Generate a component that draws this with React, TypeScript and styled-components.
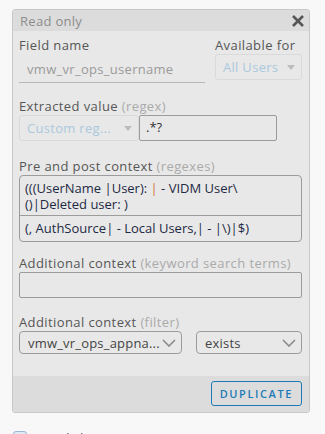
import React from 'react';
import styled, { createGlobalStyle } from 'styled-components';

const GlobalStyle = createGlobalStyle`
  html, body {
    margin: 0;
    padding: 0;
    background: #f8f8f8;
    font-family: 'Open Sans', 'Liberation Sans', sans-serif;
  }
  * { box-sizing: border-box; }
`;

const Caret = () => (
  <svg width="8" height="5" viewBox="0 0 8 5">
    <path d="M0 0 L8 0 L4 5 Z" fill="currentColor" />
  </svg>
);

const Chevron = () => (
  <svg width="14" height="8" viewBox="0 0 14 8">
    <path d="M1 1 L7 7 L13 1" fill="none" stroke="#8a8a8a" strokeWidth="1.6" />
  </svg>
);

const App = () => (
  <>
    <GlobalStyle />
    <Page>
      <Panel>
        <Header>
          <HeaderTitle>Read only</HeaderTitle>
          <Close>
            <svg width="14" height="14" viewBox="0 0 14 14">
              <path d="M2 2 L12 12 M12 2 L2 12" stroke="#565656" strokeWidth="2.6" />
            </svg>
          </Close>
        </Header>
        <Body>
          <FieldRow>
            <Column $grow>
              <Label>Field name</Label>
              <UnderlineInput>vmw_vr_ops_username</UnderlineInput>
            </Column>
            <Column>
              <Label>Available for</Label>
              <DisabledSelect $width={87}>
                All Users
                <Caret />
              </DisabledSelect>
            </Column>
          </FieldRow>

          <Section $gap={15}>
            <Label>
              Extracted value <Hint>(regex)</Hint>
            </Label>
            <InlineRow>
              <DisabledSelect $width={120}>
                Custom reg...
                <Caret />
              </DisabledSelect>
              <TextBox $width={138}>.*?</TextBox>
            </InlineRow>
          </Section>

          <Section $gap={17}>
            <Label>
              Pre and post context <Hint>(regexes)</Hint>
            </Label>
            <ContextBox>
              <ContextPart>
                <ContextLine>
                  (((UserName |User): <Pipe>|</Pipe> - VIDM User\
                </ContextLine>
                <ContextLine>()|Deleted user: )</ContextLine>
              </ContextPart>
              <ContextPart $last>
                <ContextLine>(, AuthSource| - Local Users,| - |\)|$)</ContextLine>
              </ContextPart>
            </ContextBox>
          </Section>

          <Section $gap={13}>
            <Label>
              Additional context <Hint>(keyword search terms)</Hint>
            </Label>
            <TextBox />
          </Section>

          <Section $gap={16}>
            <Label>
              Additional context <Hint>(filter)</Hint>
            </Label>
            <FilterRow>
              <Dropdown $width={163}>
                <span>vmw_vr_ops_appna...</span>
                <Chevron />
              </Dropdown>
              <Dropdown $width={106}>
                <span>exists</span>
                <Chevron />
              </Dropdown>
            </FilterRow>
          </Section>
        </Body>
        <Footer>
          <Button>Duplicate</Button>
        </Footer>
      </Panel>
      <Below>
        <Checkbox />
        <BelowText>Send alert</BelowText>
      </Below>
    </Page>
  </>
);

const Page = styled.div`
  padding: 9px 15px 0 12px;
`;

const Panel = styled.div`
  border: 1px solid #c8c8c8;
  border-radius: 3px;
  background: #e8e8e8;
  overflow: hidden;
`;

const Header = styled.div`
  display: flex;
  align-items: center;
  justify-content: space-between;
  height: 21px;
  padding: 0 4px 0 7px;
  background: #dcdcdc;
`;

const HeaderTitle = styled.span`
  font-size: 13px;
  letter-spacing: 0.3px;
  color: #8c8c8c;
`;

const Close = styled.span`
  display: flex;
  align-items: center;
`;

const Body = styled.div`
  padding: 6px 7px 22px 6px;
`;

const FieldRow = styled.div`
  display: flex;
  gap: 10px;
`;

const Column = styled.div<{ $grow?: boolean }>`
  display: flex;
  flex-direction: column;
  flex: ${p => (p.$grow ? 1 : '0 0 auto')};
`;

const Label = styled.div`
  font-size: 13px;
  line-height: 16px;
  letter-spacing: 0.4px;
  color: #565656;
  margin-bottom: 1px;
  white-space: nowrap;
`;

const Hint = styled.span`
  color: #aaaaaa;
`;

const UnderlineInput = styled.div`
  margin-top: 5px;
  height: 24px;
  padding: 0 0 0 8px;
  font-size: 13px;
  line-height: 20px;
  letter-spacing: 0.3px;
  color: #9a9a9a;
  border-bottom: 1px solid #b8b8b8;
`;

const DisabledSelect = styled.div<{ $width: number }>`
  display: flex;
  align-items: center;
  justify-content: space-between;
  width: ${p => p.$width}px;
  height: 26px;
  padding: 0 6px 0 7px;
  border: 1px solid #dadada;
  border-radius: 3px;
  font-size: 13px;
  letter-spacing: 0.3px;
  color: #aac8de;
  white-space: nowrap;
  svg { color: #bcbcbc; }
`;

const Section = styled.div<{ $gap: number }>`
  margin-top: ${p => p.$gap}px;
`;

const InlineRow = styled.div`
  display: flex;
`;

const TextBox = styled.div<{ $width?: number }>`
  width: ${p => (p.$width ? `${p.$width}px` : '100%')};
  height: 26px;
  padding: 0 6px;
  border: 1px solid #9c9c9c;
  border-radius: 2px;
  font-size: 13px;
  line-height: 22px;
  color: #333;
`;

const ContextBox = styled.div`
  border: 1px solid #9c9c9c;
  border-radius: 4px;
  overflow: hidden;
`;

const ContextPart = styled.div<{ $last?: boolean }>`
  padding: 4px 5px ${p => (p.$last ? '5px' : '3px')};
  border-bottom: ${p => (p.$last ? 'none' : '1px solid #9c9c9c')};
`;

const ContextLine = styled.div`
  font-size: 13px;
  line-height: 16px;
  color: #1e2a44;
  white-space: nowrap;
`;

const Pipe = styled.span`
  color: #d2743a;
`;

const FilterRow = styled.div`
  display: flex;
  justify-content: space-between;
`;

const Dropdown = styled.div<{ $width: number }>`
  display: flex;
  align-items: center;
  justify-content: space-between;
  width: ${p => p.$width}px;
  height: 23px;
  padding: 0 5px 0 8px;
  border: 1px solid #9c9c9c;
  border-radius: 4px;
  font-size: 13px;
  letter-spacing: 0.2px;
  color: #444;
  span {
    white-space: nowrap;
    overflow: hidden;
  }
`;

const Footer = styled.div`
  display: flex;
  justify-content: flex-end;
  padding: 5px 7px 6px;
  background: #dcdcdc;
`;

const Button = styled.button`
  height: 25px;
  padding: 0 8px;
  background: transparent;
  border: 1px solid #1c7bb6;
  border-radius: 3px;
  font-family: 'Open Sans', 'Liberation Sans', sans-serif;
  font-size: 11px;
  font-weight: 600;
  letter-spacing: 1.6px;
  text-transform: uppercase;
  color: #1c7bb6;
  cursor: pointer;
`;

const Below = styled.div`
  display: flex;
  align-items: center;
  gap: 12px;
  margin-top: 16px;
  padding-left: 1px;
`;

const Checkbox = styled.div`
  width: 14px;
  height: 14px;
  border: 1px solid #9bb6d6;
  border-radius: 3px;
  background: #dfe8f3;
`;

const BelowText = styled.span`
  font-size: 13px;
  color: #555;
`;

export default App;
